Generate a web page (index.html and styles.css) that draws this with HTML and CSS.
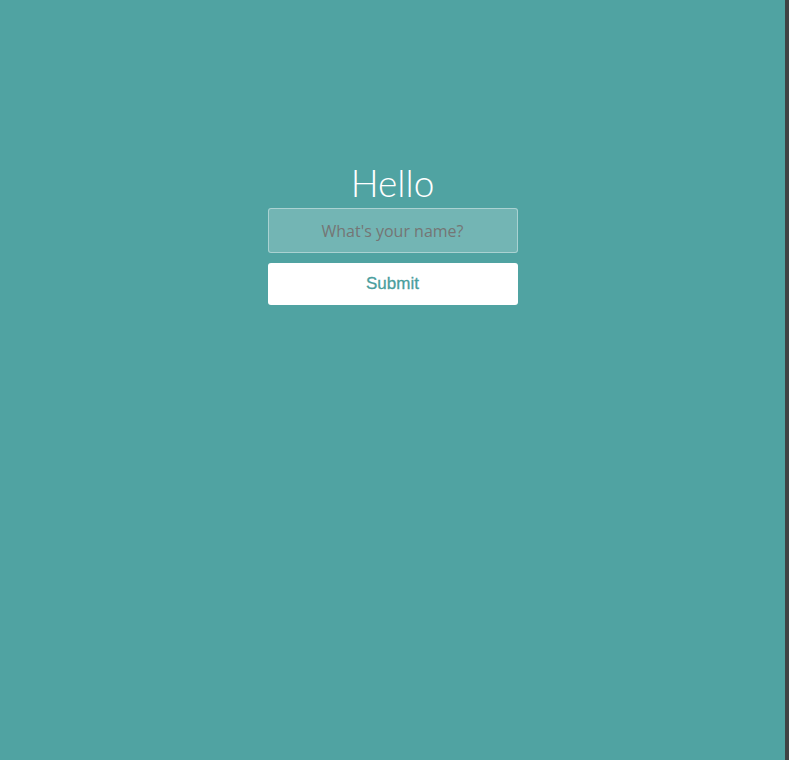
FILE: index.html
```html
<!DOCTYPE html>
<html>
<head>
<meta charset="utf-8">
<link rel="stylesheet" href="styles.css">
</head>
<body>
<div class="page">
  <main class="wrapper">
    <h1 class="title">Hello</h1>
    <form class="form">
      <input class="name" type="text" placeholder="What's your name?">
      <button class="submit" type="button">Submit</button>
    </form>
  </main>
  <div class="edge"></div>
</div>
</body>
</html>
```

FILE: styles.css
```css
html, body {
  margin: 0;
  padding: 0;
  height: 100%;
}
body {
  background: #50a3a2;
  font-family: "Open Sans", sans-serif;
}
.page {
  display: flex;
  height: 760px;
}
.wrapper {
  flex: 1;
  display: flex;
  flex-direction: column;
  align-items: center;
  padding-top: 160px;
}
.edge {
  width: 4px;
  background: #3f4344;
}
.title {
  margin: 0;
  height: 48px;
  font-family: "Lato", sans-serif;
  font-weight: 300;
  font-size: 37px;
  line-height: 46px;
  color: #fff;
}
.form {
  display: flex;
  flex-direction: column;
  gap: 10px;
}
.name {
  box-sizing: border-box;
  width: 250px;
  height: 45px;
  margin: 0;
  border: 1px solid rgba(255,255,255,0.4);
  background: rgba(255,255,255,0.2);
  border-radius: 3px;
  text-align: center;
  font-family: "Open Sans", sans-serif;
  font-weight: 400;
  font-size: 16px;
  color: #fff;
  outline: none;
}
.name::placeholder {
  color: #757575;
}
.submit {
  box-sizing: border-box;
  width: 250px;
  height: 42px;
  margin: 0;
  border: 0;
  border-radius: 3px;
  background: #fff;
  color: #4a9e9d;
  font-family: "Liberation Sans", Arial, sans-serif;
  font-size: 17px;
  font-weight: 400;
  -webkit-text-stroke: 0.3px #4a9e9d;
}
```
